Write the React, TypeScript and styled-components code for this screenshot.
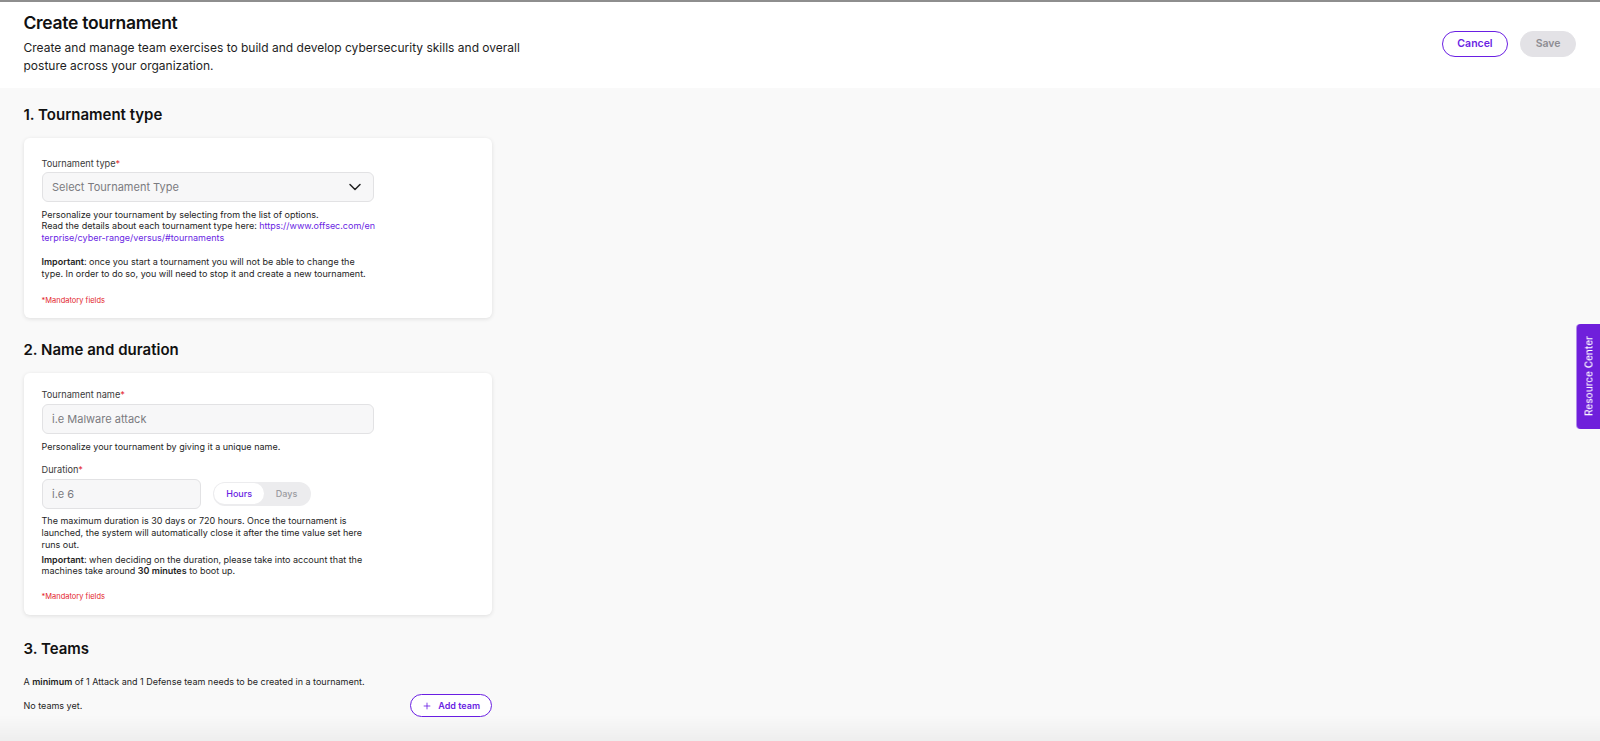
import React from "react";
import styled, { createGlobalStyle } from "styled-components";
import { ChevronDown, Plus } from "lucide-react";

const GlobalStyle = createGlobalStyle`
  html, body { margin: 0; padding: 0; }
  body {
    font-family: Inter, "Noto Sans", "Liberation Sans", sans-serif;
    background: #f9f9f9;
    color: #1c1c1e;
    -webkit-font-smoothing: antialiased;
  }
  * { box-sizing: border-box; }
`;

const purple = "#6a1fe3";

const Header = styled.header`
  background: #ffffff;
  border-top: 2px solid #8e8e8e;
  padding: 10px 24px 12px 23.5px;
  display: flex;
  justify-content: space-between;
  align-items: center;
`;

const HeaderText = styled.div`
  display: flex;
  flex-direction: column;
  gap: 5px;
`;

const Title = styled.h1`
  margin: 0;
  font-size: 17.5px;
  line-height: 22px;
  font-weight: 600;
  color: #111;
  letter-spacing: -0.3px;
`;

const Description = styled.p`
  margin: 0;
  font-size: 12px;
  line-height: 18.3px;
  color: #1e1e1e;
  max-width: 530px;
`;

const Actions = styled.div`
  display: flex;
  gap: 12px;
  align-items: center;
`;

const Button = styled.button<{ $variant: "outline" | "disabled" }>`
  height: 25.5px;
  padding: 0 14.5px;
  border-radius: 13px;
  font-family: inherit;
  font-size: 10.5px;
  font-weight: 600;
  display: inline-flex;
  align-items: center;
  gap: 6.5px;
  cursor: pointer;
  border: 1.5px solid ${(p) => (p.$variant === "outline" ? purple : "#e3e2e6")};
  background: ${(p) => (p.$variant === "outline" ? "#fff" : "#e3e2e6")};
  color: ${(p) => (p.$variant === "outline" ? purple : "#8e8d93")};
`;

const Main = styled.main`
  padding: 17px 23.5px 14px;
  width: 520px;
`;

const SectionTitle = styled.h2<{ $top: number }>`
  margin: ${(p) => p.$top}px 0 13px;
  font-size: 15px;
  line-height: 20px;
  font-weight: 600;
  color: #111;
`;

const Card = styled.section<{ $top: number; $bottom: number }>`
  background: #fff;
  border-radius: 6px;
  box-shadow: 0 1px 4px rgba(0, 0, 0, 0.11);
  padding: ${(p) => p.$top}px 18px ${(p) => p.$bottom}px;
  width: 468px;
`;

const Field = styled.div<{ $gap?: number }>`
  display: flex;
  flex-direction: column;
  margin-top: ${(p) => p.$gap ?? 0}px;
`;

const Label = styled.label`
  font-size: 9.2px;
  line-height: 12px;
  color: #3a3a3a;
  margin-bottom: 2.5px;
`;

const Req = styled.span`
  color: #e3262c;
`;

const InputBox = styled.div<{ $width: number }>`
  width: ${(p) => p.$width}px;
  height: 30px;
  border: 1px solid #e2e2e4;
  border-radius: 6px;
  background: #f7f7f8;
  display: flex;
  align-items: center;
  justify-content: space-between;
  padding: 0 8px 0 9.5px;
  font-size: 11px;
  color: #7b7b80;
`;

const Help = styled.div<{ $top: number }>`
  width: 336px;
  margin-top: ${(p) => p.$top}px;
  font-size: 9px;
  line-height: 11.8px;
  color: #1e1e1e;
`;

const Para = styled.p<{ $top?: number }>`
  margin: ${(p) => p.$top ?? 0}px 0 0;
`;

const Strong = styled.b`
  font-weight: 600;
`;

const Link = styled.a`
  color: ${purple};
  text-decoration: none;
  word-break: break-all;
`;

const Mandatory = styled.div<{ $top: number }>`
  margin-top: ${(p) => p.$top}px;
  font-size: 7.5px;
  line-height: 10px;
  color: #e3262c;
`;

const DurationRow = styled.div`
  display: flex;
  align-items: center;
  gap: 12.5px;
`;

const Toggle = styled.div`
  display: flex;
  align-items: center;
  height: 23.5px;
  width: 97.5px;
  padding: 1.4px;
  border-radius: 12px;
  background: #ececee;
`;

const ToggleOption = styled.span<{ $active?: boolean }>`
  flex: ${(p) => (p.$active ? "0 0 49.5px" : "1")};
  height: 20.7px;
  border-radius: 11px;
  display: flex;
  align-items: center;
  justify-content: center;
  font-size: 9px;
  font-weight: 500;
  background: ${(p) => (p.$active ? "#fff" : "transparent")};
  color: ${(p) => (p.$active ? purple : "#9a9aa0")};
`;

const TeamsText = styled.p`
  margin: 17px 0 0;
  font-size: 9px;
  line-height: 12px;
  color: #1e1e1e;
`;

const TeamsRow = styled.div`
  margin-top: 6px;
  width: 468px;
  display: flex;
  justify-content: space-between;
  align-items: center;
  font-size: 9px;
  color: #1e1e1e;
`;

const SmallButton = styled(Button)`
  height: 23px;
  padding: 0 10.5px;
  border-width: 1.2px;
  font-size: 9px;
  border-radius: 12px;
`;

const ResourceTab = styled.div`
  position: fixed;
  right: 0;
  top: 324px;
  width: 23.5px;
  height: 105px;
  background: #6f1fdb;
  color: #fff;
  display: flex;
  align-items: center;
  justify-content: center;
  font-size: 10px;
  font-weight: 500;
  writing-mode: vertical-rl;
  transform: rotate(180deg);
  border-radius: 0 4px 4px 0;
`;

const BottomFade = styled.div`
  position: fixed;
  left: 0;
  right: 0;
  bottom: 0;
  height: 26px;
  background: linear-gradient(to bottom, rgba(0, 0, 0, 0), rgba(0, 0, 0, 0.045));
  pointer-events: none;
`;

export default function App() {
  return (
    <>
      <GlobalStyle />
      <Header>
        <HeaderText>
          <Title>Create tournament</Title>
          <Description>
            Create and manage team exercises to build and develop cybersecurity skills and overall
            posture across your organization.
          </Description>
        </HeaderText>
        <Actions>
          <Button $variant="outline">Cancel</Button>
          <Button $variant="disabled">Save</Button>
        </Actions>
      </Header>

      <Main>
        <SectionTitle $top={0}>1. Tournament type</SectionTitle>
        <Card $top={20} $bottom={12.5}>
          <Field>
            <Label>
              Tournament type<Req>*</Req>
            </Label>
            <InputBox $width={332.5}>
              <span>Select Tournament Type</span>
              <ChevronDown size={20} color="#222" strokeWidth={1.8} />
            </InputBox>
          </Field>
          <Help $top={6.5}>
            <Para>Personalize your tournament by selecting from the list of options.</Para>
            <Para>
              Read the details about each tournament type here:{" "}
              <Link href="#">https://www.offsec.com/enterprise/cyber-range/versus/#tournaments</Link>
            </Para>
            <Para $top={12.3}>
              <Strong>Important</Strong>: once you start a tournament you will not be able to change
              the type. In order to do so, you will need to stop it and create a new tournament.
            </Para>
          </Help>
          <Mandatory $top={15.8}>*Mandatory fields</Mandatory>
        </Card>

        <SectionTitle $top={21.7}>2. Name and duration</SectionTitle>
        <Card $top={16.5} $bottom={13}>
          <Field>
            <Label>
              Tournament name<Req>*</Req>
            </Label>
            <InputBox $width={332.5}>
              <span>i.e Malware attack</span>
            </InputBox>
          </Field>
          <Help $top={6.8}>
            <Para>Personalize your tournament by giving it a unique name.</Para>
          </Help>
          <Field $gap={11.8}>
            <Label>
              Duration<Req>*</Req>
            </Label>
            <DurationRow>
              <InputBox $width={159}>
                <span>i.e 6</span>
              </InputBox>
              <Toggle>
                <ToggleOption $active>Hours</ToggleOption>
                <ToggleOption>Days</ToggleOption>
              </Toggle>
            </DurationRow>
          </Field>
          <Help $top={6.5}>
            <Para>
              The maximum duration is 30 days or 720 hours. Once the tournament is launched, the
              system will automatically close it after the time value set here runs out.
            </Para>
            <Para $top={3}>
              <Strong>Important</Strong>: when deciding on the duration, please take into account
              that the machines take around <Strong>30 minutes</Strong> to boot up.
            </Para>
          </Help>
          <Mandatory $top={15}>*Mandatory fields</Mandatory>
        </Card>

        <SectionTitle $top={24}>3. Teams</SectionTitle>
        <TeamsText>
          A <Strong>minimum</Strong> of 1 Attack and 1 Defense team needs to be created in a
          tournament.
        </TeamsText>
        <TeamsRow>
          <span>No teams yet.</span>
          <SmallButton $variant="outline">
            <Plus size={10} strokeWidth={2} />
            Add team
          </SmallButton>
        </TeamsRow>
      </Main>

      <ResourceTab>Resource Center</ResourceTab>
      <BottomFade />
    </>
  );
}
